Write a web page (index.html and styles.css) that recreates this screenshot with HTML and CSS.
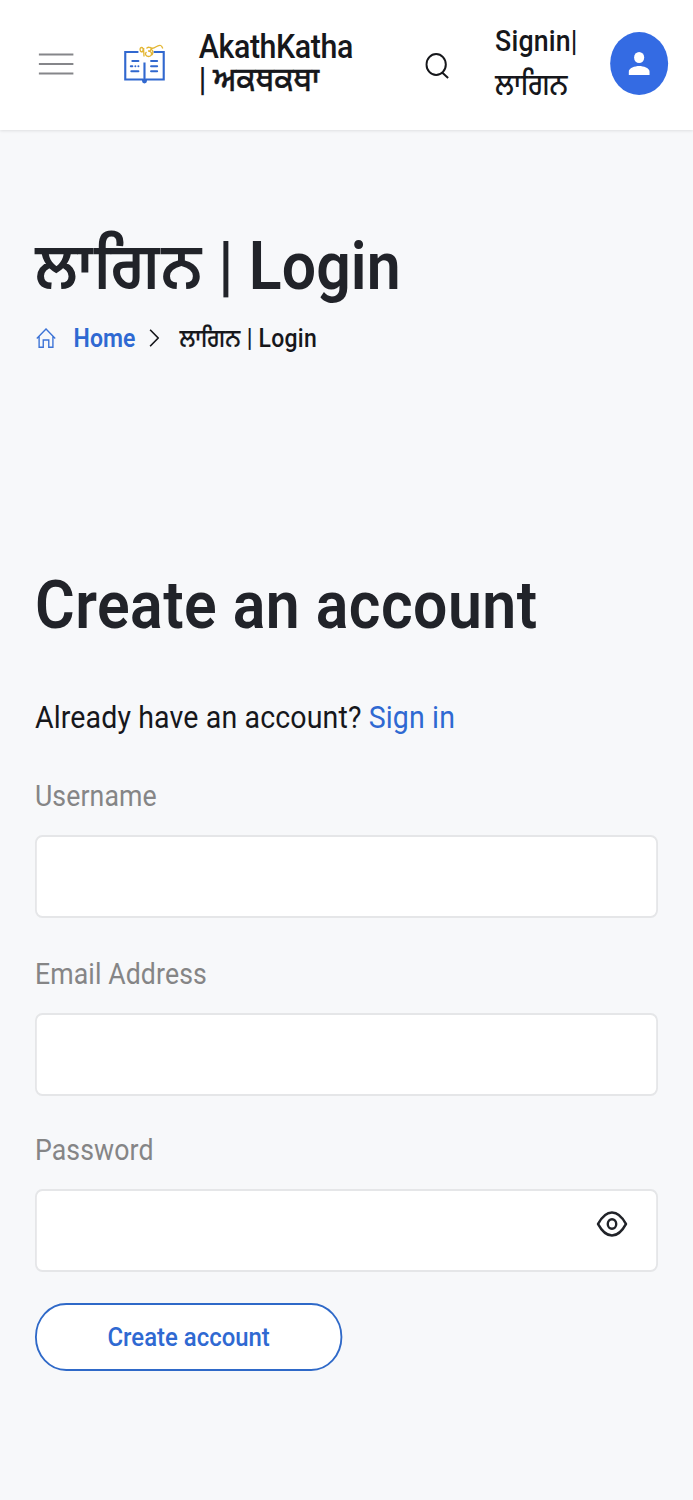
FILE: index.html
```html
<!DOCTYPE html>
<html lang="en">
<head>
<meta charset="utf-8">
<meta name="viewport" content="width=device-width">
<title>Login | AkathKatha</title>
<link rel="stylesheet" href="styles.css">
</head>
<body>
<div class="page">
  <header class="topbar">
    <svg class="menu" viewBox="0 0 38 22" preserveAspectRatio="none"><path d="M0 1.500h38M0 11h38M0 20.500h38"/></svg>
    <svg class="logo" viewBox="0 0 40 40" preserveAspectRatio="none">
      <path class="book" d="M14 8H1v27.500h17l2 2 2-2h17V8H29M20 18.500v17"/>
      <path class="lines" d="M8 17h6M6.500 22.200h1.500M11 22.200h0M14 22.200h0M7 27.300h7M26.500 17h6M26.500 22.200h6M26.500 27.300h6"/>
      <circle class="knob" cx="20" cy="37" r="2.400"/>
      <path class="onkar" d="M18 8c-3 0-3-4.500-.800-4.500S19 8 16.800 8M19.200 4c-.2 3 .3 6 .3 8.500M22 4.500c1-2 5-1.500 4.500.800-.3 1.500-2 1.700-3 1.700 4.500-.3 4.500 5.500.5 5.500-3 0-4-3-2-4.500M27 5.500c2 1 1.500 5.500-.5 5.500M25.500 3.200c1 1.600 3.500 1.300 5.500-.2 2-1.300 3.500-2 5-1.500 1.300.400 1.500 1.500 2 3"/>
    </svg>
    <div class="brand"><span>AkathKatha</span><span>| <span class="pa">ਅਕਥਕਥਾ</span></span></div>
    <svg class="search" viewBox="0 0 24 26" preserveAspectRatio="none"><ellipse cx="11" cy="11.500" rx="9.700" ry="10.500"/><path d="M17 19.500l6 5.500"/></svg>
    <a class="signin"><span>Signin|</span><span class="pa">ਲਾਗਿਨ</span></a>
    <div class="avatar"><svg viewBox="0 0 23 23" preserveAspectRatio="none"><circle cx="11.500" cy="5.500" r="5.500"/><path d="M0 23v-3c0-4 7-6 11.500-6S23 16 23 20v3z"/></svg></div>
  </header>
  <main class="content">
    <h1 class="title"><span class="pa">ਲਾਗਿਨ</span> | Login</h1>
    <nav class="crumbs">
      <svg class="home" viewBox="0 0 22 20" preserveAspectRatio="none"><path d="M1 10.500L11 1l10 9.500M3.500 8.500V19.300H8V12h6v7.300h4.500V8.500"/></svg>
      <a class="homelink">Home</a>
      <svg class="chev" viewBox="0 0 10 18" preserveAspectRatio="none"><path d="M1 .7L9 9l-8 8.300"/></svg>
      <span class="here"><span class="pa">ਲਾਗਿਨ</span> | Login</span>
    </nav>
    <h2 class="subtitle">Create an account</h2>
    <p class="have">Already have an account? <a>Sign in</a></p>
    <form class="form">
      <label class="label">Username</label>
      <div class="field"></div>
      <label class="label">Email Address</label>
      <div class="field field-email"></div>
      <label class="label">Password</label>
      <div class="field field-password"><svg class="eye" viewBox="0 0 34 26" preserveAspectRatio="none"><path d="M1.800 13C6.500 5 11.500 1.500 17 1.500S27.500 5 32.200 13C27.500 21 22.500 24.500 17 24.500S6.500 21 1.800 13z"/><ellipse cx="17" cy="13" rx="4.600" ry="4.800"/></svg></div>
      <button class="submit" type="button">Create account</button>
    </form>
  </main>
</div>
</body>
</html>
```
FILE: styles.css
```css
* { box-sizing: border-box; }
html, body { margin: 0; background: #f7f8fa; }
body { width: 693px; height: 1500px; overflow: hidden; }
.page {
  width: 753px;
  height: 1500px;
  margin-right: -60px;
  transform: scaleX(.9203);
  transform-origin: 0 0;
  font-family: Roboto, "Noto Sans Gurmukhi", "Noto Sans", sans-serif;
  color: #16171b;
  background: #f7f8fa;
}
svg { display: block; flex: none; fill: none; }
a { color: #2f69d2; }
.topbar {
  height: 130px;
  background: #fff;
  box-shadow: 0 1px 3px rgba(0, 0, 0, .1);
  display: flex;
  align-items: flex-start;
  padding-left: 42px;
}
.menu { width: 38px; height: 22px; margin-top: 52.5px; stroke: #85868a; stroke-width: 2; }
.logo { width: 44px; height: 40px; margin: 44px 0 0 54.5px; overflow: visible; }
.book { stroke: #3168cf; stroke-width: 2.100; }
.lines { stroke: #3168cf; stroke-width: 2; stroke-linecap: round; }
.knob { fill: #3168cf; }
.onkar { stroke: #e3b633; stroke-width: 1.300; }
.brand, .signin { display: flex; flex-direction: column; font-weight: 500; white-space: nowrap; color: #16171b; }
.brand { width: 207px; margin: 30px 0 0 37.5px; font-size: 33px; line-height: 33px; letter-spacing: -.45px; }
.brand .pa { letter-spacing: 0; -webkit-text-stroke: .4px currentColor; }
.search { width: 26px; height: 26px; margin: 53px 0 0 39px; stroke: #16171b; stroke-width: 2; }
.signin { width: 92px; margin: 19px 0 0 50px; font-size: 29px; line-height: 44px; letter-spacing: .2px; }
.signin .pa { font-size: 30px; letter-spacing: 0; }
.avatar {
  width: 63px; height: 63px; margin: 32px 0 0 33px; border-radius: 50%;
  background: #346be3; display: grid; place-items: center;
}
.avatar svg { width: 23px; height: 23px; fill: #fff; }
.content { padding: 97px 38px 0; }
.title, .subtitle { margin: 0; font-weight: 600; color: #212329; white-space: nowrap; }
.title { font-size: 66px; line-height: 80px; letter-spacing: .1px; }
.title .pa { letter-spacing: 1.3px; }
.crumbs { display: flex; align-items: center; height: 40px; margin-top: 11px; font-size: 25px; font-weight: 500; line-height: 40px; white-space: nowrap; }
.crumbs a, .here { padding-top: 2px; }
.home { width: 22px; height: 20px; margin-left: 1px; stroke: #3c73d6; stroke-width: 1.500; }
.homelink { margin-left: 19px; width: 66px; font-weight: 600; }
.chev { width: 11px; height: 18px; margin-left: 16px; stroke: #16171b; stroke-width: 1.600; }
.here { margin-left: 22px; letter-spacing: .25px; }
.here .pa { -webkit-text-stroke: .2px currentColor; }
.subtitle { margin-top: 208px; font-size: 66px; line-height: 80px; letter-spacing: .5px; }
.have { margin: 52px 0 0; font-size: 31px; line-height: 40px; letter-spacing: .14px; white-space: nowrap; }
.form { margin-top: 38px; }
.label { display: block; height: 59px; font-size: 29px; line-height: 40px; letter-spacing: .1px; color: #858586; }
.field {
  height: 83px; margin-bottom: 36px; padding: 20px 31px 0 0;
  background: #fff; border: 2px solid #e5e6e8; border-radius: 8px;
  display: flex; justify-content: flex-end;
}
.field-email { margin-bottom: 33.5px; }
.field-password { margin-bottom: 31px; }
.eye { width: 34px; height: 26px; margin-top: .5px; stroke: #212329; stroke-width: 2.600; }
.submit {
  width: 334px; height: 68px; padding: 0; display: block;
  font: 500 26px/62px Roboto, sans-serif; color: #2f69d2;
  background: #fff; border: 2px solid #2f69c8; border-radius: 34px;
}
```
